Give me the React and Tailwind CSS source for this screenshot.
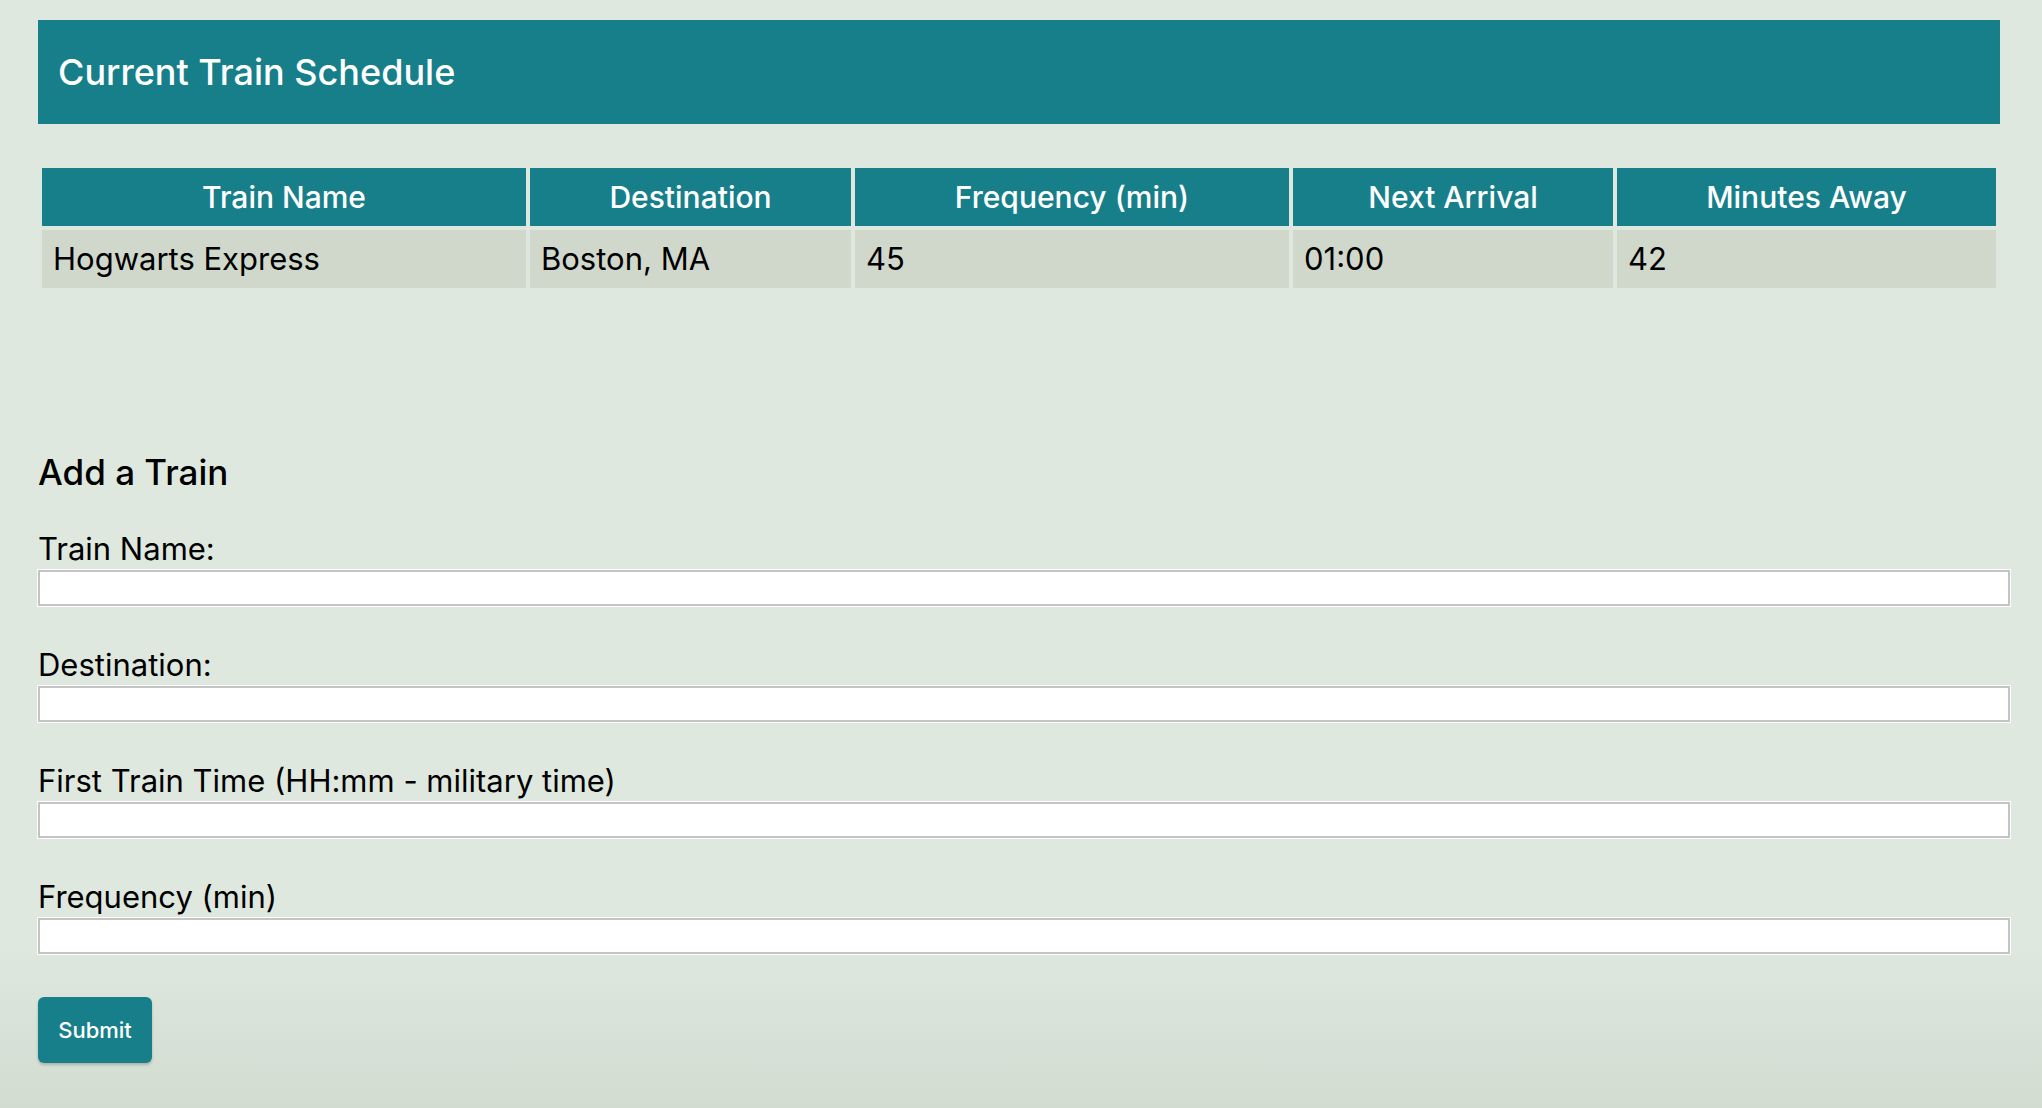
import { useState } from 'react'

const trains = [
  { name: 'Hogwarts Express', destination: 'Boston, MA', frequency: 45, next: '01:00', away: 42 }
]

const columns = [
  { label: 'Train Name', width: 'w-[484px]' },
  { label: 'Destination', width: 'w-[321px]' },
  { label: 'Frequency (min)', width: 'w-[434px]' },
  { label: 'Next Arrival', width: 'w-[320px]' },
  { label: 'Minutes Away', width: 'w-[379px]' }
]

const fields = [
  { id: 'name', label: 'Train Name:' },
  { id: 'destination', label: 'Destination:' },
  { id: 'first', label: 'First Train Time (HH:mm - military time)' },
  { id: 'frequency', label: 'Frequency (min)' }
]

const App = () => {
  const [form, setForm] = useState({ name: '', destination: '', first: '', frequency: '' })

  const handleChange = (e) => {
    setForm({ ...form, [e.target.name]: e.target.value })
  }

  return (
    <div className="min-h-screen bg-gradient-to-b from-[#dfe8de] via-[#dfe8de] via-85% to-[#d3dcd1] font-['Inter','Liberation_Sans',sans-serif] text-black">
      <div className="pl-[38px] pt-[20px] pb-[44px]">
        <div className="w-[1962px]">
          <div className="flex h-[104px] items-center bg-[#177f8a] pl-[20px]">
            <h1 className="text-[36px] font-medium leading-none text-white">Current Train Schedule</h1>
          </div>

          <table className="mt-[40px] w-full border-separate border-spacing-[4px]">
            <thead>
              <tr>
                {columns.map((col) => (
                  <th
                    key={col.label}
                    className={`${col.width} h-[58px] bg-[#177f8a] text-center text-[30px] font-medium text-white`}
                  >
                    {col.label}
                  </th>
                ))}
              </tr>
            </thead>
            <tbody>
              {trains.map((train, index) => (
                <tr key={index}>
                  <td className="h-[58px] bg-[#d0d8cc] px-[11px] text-[31px]">{train.name}</td>
                  <td className="h-[58px] bg-[#d0d8cc] px-[11px] text-[31px]">{train.destination}</td>
                  <td className="h-[58px] bg-[#d0d8cc] px-[11px] text-[31px]">{train.frequency}</td>
                  <td className="h-[58px] bg-[#d0d8cc] px-[11px] text-[31px]">{train.next}</td>
                  <td className="h-[58px] bg-[#d0d8cc] px-[11px] text-[31px]">{train.away}</td>
                </tr>
              ))}
            </tbody>
          </table>
        </div>

        <h2 className="mt-[159px] text-[35px] font-medium leading-[42px]">Add a Train</h2>

        <form className="mt-[38px] flex flex-col gap-[41px]" onSubmit={(e) => e.preventDefault()}>
          {fields.map((field) => (
            <div key={field.id} className="flex flex-col gap-[3px]">
              <label htmlFor={field.id} className="text-[31px] leading-[36px]">{field.label}</label>
              <input
                id={field.id}
                name={field.id}
                value={form[field.id]}
                onChange={handleChange}
                className="h-[36px] w-[1972px] border-2 border-[#c4c4c4] bg-white px-2 text-[20px] shadow-[0_0_0_1px_#ffffff] outline-none"
              />
            </div>
          ))}
          <div className="pt-[2px]">
            <button
              type="submit"
              className="h-[66px] w-[114px] rounded-[6px] bg-[#177f8a] text-[22px] font-medium text-white shadow-[0_2px_3px_rgba(0,0,0,0.2)]"
            >
              Submit
            </button>
          </div>
        </form>
      </div>
    </div>
  )
}

export default App
